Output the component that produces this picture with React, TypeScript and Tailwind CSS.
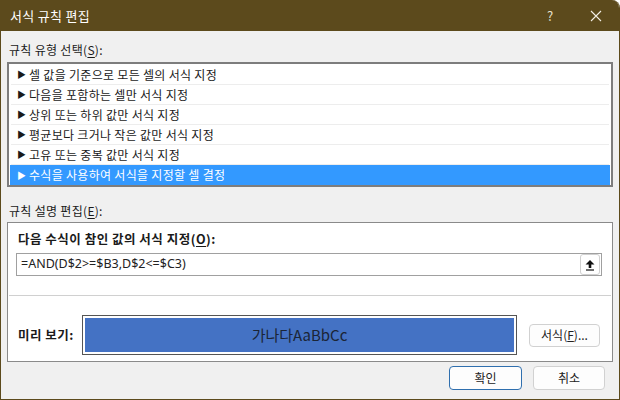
import React from 'react'

const rules = [
  '셀 값을 기준으로 모든 셀의 서식 지정',
  '다음을 포함하는 셀만 서식 지정',
  '상위 또는 하위 값만 서식 지정',
  '평균보다 크거나 작은 값만 서식 지정',
  '고유 또는 중복 값만 서식 지정',
  '수식을 사용하여 서식을 지정할 셀 결정',
]

const font = { fontFamily: '"Noto Sans CJK KR", "Noto Sans", sans-serif' }

function Underlined({ text, key1 }: { text: string; key1: string }) {
  return (
    <>
      {text}(<span className="underline underline-offset-2">{key1}</span>):
    </>
  )
}

export default function App() {
  const selected = 5
  return (
    <div
      className="w-[620px] h-[400px] flex flex-col bg-[#f0f0f0] border-x border-b border-[#5c4a1c] rounded-tr-[8px] overflow-hidden text-[12px] text-[#1a1a1a]"
      style={font}
    >
      {/* title bar */}
      <div className="h-[31px] shrink-0 bg-[#5c4a1c] flex items-center pl-[9px] text-white">
        <span className="text-[13px] leading-none tracking-[0.3px]">서식 규칙 편집</span>
        <span className="ml-auto w-[46px] text-center text-[13px] text-[#e8e2d2]">?</span>
        <span className="w-[46px] flex justify-center">
          <svg width="12" height="12" viewBox="0 0 12 12" stroke="#f2eee4" strokeWidth="1.1">
            <path d="M1 1 L11 11 M11 1 L1 11" />
          </svg>
        </span>
      </div>

      <div className="flex flex-col px-[6px]">
        <div className="mt-[9px] h-[20px] leading-[20px] pl-[2px] tracking-[0.3px]">
          <Underlined text="규칙 유형 선택" key1="S" />
        </div>

        {/* rule list */}
        <div className="mt-[2px] h-[125px] bg-white border-2 border-[#7d7d7d] pt-px px-px flex flex-col">
          {rules.map((r, i) => (
            <div
              key={r}
              className={
                i === selected
                  ? 'h-[20px] flex items-center pl-[7px] bg-[#3399ff] text-white'
                  : 'h-[20px] flex items-center pl-[6px] border-b border-[#ededed] mx-px'
              }
            >
              <span className="text-[9px] w-[12px] leading-none">▶</span>
              <span className="leading-none tracking-[0.3px]">{r}</span>
            </div>
          ))}
        </div>

        <div className="mt-[14px] h-[20px] leading-[20px] pl-[2px] tracking-[0.3px]">
          <Underlined text="규칙 설명 편집" key1="E" />
        </div>

        {/* description panel */}
        <div className="mt-px h-[140px] bg-white border border-[#8a8a8a] flex flex-col">
          <div className="mt-[6px] h-[20px] leading-[20px] pl-[10px] font-bold text-[12.5px] tracking-[0.5px]">
            <Underlined text="다음 수식이 참인 값의 서식 지정" key1="O" />
          </div>
          <div className="mt-[4px] ml-[8px] w-[586px] h-[23px] border border-[#a0a0a0] flex items-center">
            <span className="pl-[4px] text-[12.5px] text-[#222]" style={{ fontFamily: '"Noto Sans", sans-serif' }}>
              =AND(D$2&gt;=$B3,D$2&lt;=$C3)
            </span>
            <span className="ml-auto mr-px w-[20px] h-[21px] border border-[#d0d0d0] rounded-[3px] bg-white flex items-center justify-center">
              <svg width="10" height="12" viewBox="0 0 10 12" fill="#111">
                <path d="M5 1 L9.5 5.5 L6.3 5.5 L6.3 9 L3.7 9 L3.7 5.5 L0.5 5.5 Z" />
                <rect x="1" y="10.4" width="8" height="1.2" />
              </svg>
            </span>
          </div>
          <div className="mt-[19px] mx-px h-px bg-[#d0d0d0]" />
          <div className="mt-[19px] flex items-center">
            <span className="w-[74px] pl-[10px] font-bold text-[12.5px] tracking-[0.5px]">미리 보기:</span>
            <div className="w-[435px] h-[40px] border border-[#555] p-[2px] bg-white">
              <div className="h-full bg-[#4472c4] flex items-center justify-center text-[15px] text-[#1b2536]">
                가나다AaBbCc
              </div>
            </div>
            <button className="ml-[12px] w-[71px] h-[23px] border border-[#d1d1d1] rounded-[4px] bg-[#fdfdfd] text-[12px] text-[#222]">
              서식(<span className="underline">F</span>)...
            </button>
          </div>
        </div>

        {/* buttons */}
        <div className="mt-[4px] flex justify-end pr-[8px] gap-[11px]">
          <button className="w-[73px] h-[24px] border border-[#2f6fae] rounded-[4px] bg-[#fdfdfd] text-[12px] text-[#222]">
            확인
          </button>
          <button className="w-[72px] h-[24px] border border-[#d1d1d1] rounded-[4px] bg-[#fdfdfd] text-[12px] text-[#222]">
            취소
          </button>
        </div>
      </div>
    </div>
  )
}
